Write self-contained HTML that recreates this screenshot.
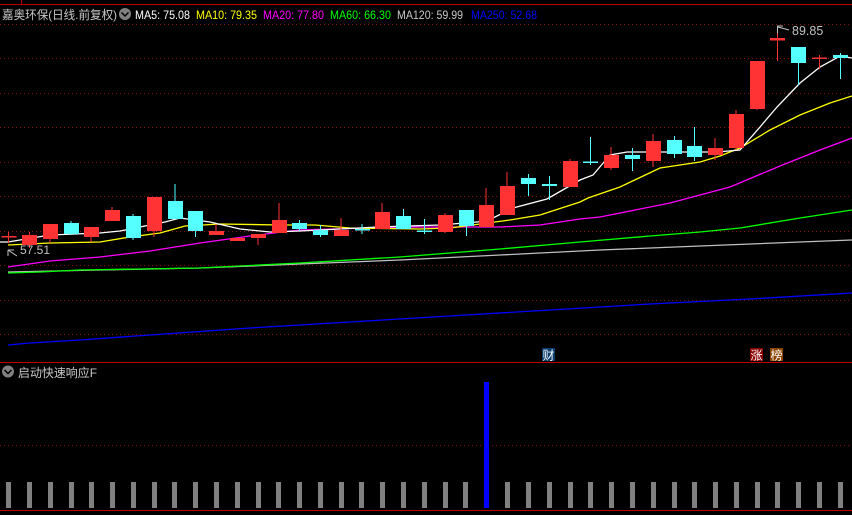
<!DOCTYPE html>
<html><head><meta charset="utf-8"><style>
html,body{margin:0;padding:0;background:#000;overflow:hidden;}
svg{display:block;font-family:"Liberation Sans","Noto Sans CJK SC",sans-serif;}
</style></head><body>
<svg width="852" height="515" viewBox="0 0 852 515" xmlns="http://www.w3.org/2000/svg">
<rect width="852" height="515" fill="#000"/>
<line x1="0" y1="4.5" x2="852" y2="4.5" stroke="#c00000" stroke-width="1"/>
<line x1="21.5" y1="0" x2="21.5" y2="4" stroke="#c00000"/>
<g stroke="#8a1010" stroke-width="1" stroke-dasharray="1,3">
<line x1="0" y1="24.5" x2="852" y2="24.5"/>
<line x1="0" y1="58.5" x2="852" y2="58.5"/>
<line x1="0" y1="93.5" x2="852" y2="93.5"/>
<line x1="0" y1="127.5" x2="852" y2="127.5"/>
<line x1="0" y1="162.5" x2="852" y2="162.5"/>
<line x1="0" y1="196.5" x2="852" y2="196.5"/>
<line x1="0" y1="231.5" x2="852" y2="231.5"/>
<line x1="0" y1="265.5" x2="852" y2="265.5"/>
<line x1="0" y1="300.5" x2="852" y2="300.5"/>
<line x1="0" y1="334.5" x2="852" y2="334.5"/>
<line x1="0" y1="445.5" x2="852" y2="445.5"/>
</g>
<line x1="0" y1="362.5" x2="852" y2="362.5" stroke="#c00000"/>
<line x1="0" y1="510.5" x2="852" y2="510.5" stroke="#c00000"/>

<text x="2" y="19" font-size="12" fill="#c8c8c8" textLength="115" lengthAdjust="spacingAndGlyphs">嘉奥环保(日线.前复权)</text>
<circle cx="125" cy="14" r="6" fill="#808080"/>
<path d="M121.5 12.5 L125 16 L128.5 12.5" stroke="#000" stroke-width="1.5" fill="none"/>
<g font-size="12">
<text x="135" y="19" fill="#ffffff" textLength="55" lengthAdjust="spacingAndGlyphs">MA5: 75.08</text>
<text x="196" y="19" fill="#ffff00" textLength="61" lengthAdjust="spacingAndGlyphs">MA10: 79.35</text>
<text x="263" y="19" fill="#ff00ff" textLength="61" lengthAdjust="spacingAndGlyphs">MA20: 77.80</text>
<text x="330" y="19" fill="#00ff00" textLength="61" lengthAdjust="spacingAndGlyphs">MA60: 66.30</text>
<text x="397" y="19" fill="#c8c8c8" textLength="66" lengthAdjust="spacingAndGlyphs">MA120: 59.99</text>
<text x="471" y="19" fill="#0000ff" textLength="66" lengthAdjust="spacingAndGlyphs">MA250: 52.68</text>
</g>

<polyline fill="none" stroke="#0000ff" stroke-width="1.3" points="8,345 30,343 80,340 150,335 250,328 350,322 450,316 550,310 650,304 750,299 852,293"/>
<polyline fill="none" stroke="#c0c0c0" stroke-width="1.3" points="8,272 100,270 200,268 300,264 400,260 500,255 600,250 700,246 800,242 852,240"/>
<polyline fill="none" stroke="#00ff00" stroke-width="1.3" points="8,273 40,272 80,270 200,268 300,263 400,257 500,249 580,242 650,236 700,232 740,228 800,218 852,210"/>
<polyline fill="none" stroke="#ff00ff" stroke-width="1.3" points="8,267 50,261 100,257 150,251 200,243 250,236 290,231 300,230 400,227 500,227 540,225 580,219 600,217 670,203 730,187 780,166 820,150 852,138"/>
<polyline fill="none" stroke="#ffff00" stroke-width="1.3" points="8,245 50,243 100,242 130,237 160,233 185,226 220,224 280,225 315,225 350,228 420,229 450,228 480,224 510,220 540,215 580,202 588,198 620,187 660,168 700,162 720,156 740,148 770,130 800,115 830,103 852,96"/>
<polyline fill="none" stroke="#ffffff" stroke-width="1.3" points="0,242 8,242 50,235 100,233 120,231 150,225 165,222 180,218 210,222 240,229 270,232 300,231 340,229 377,227 440,225 477,222 487,221 513,208 547,199 580,180 593,175 610,155 627,152 717,152 740,150 760,127 777,107 800,83 820,67 840,56 852,58"/>

<g fill="#ff3333" stroke="#ff3333">
<line x1="8.5" y1="232" x2="8.5" y2="243"/><rect x="1.5" y="236" width="15" height="1.5" stroke="none"/>
<line x1="29.5" y1="232" x2="29.5" y2="248"/><rect x="22" y="235" width="15" height="10" stroke="none"/>
<line x1="50" y1="224" x2="50" y2="243"/><rect x="43" y="224" width="15" height="15" stroke="none"/>
<line x1="91" y1="227" x2="91" y2="242"/><rect x="84" y="227" width="15" height="10" stroke="none"/>
<line x1="112" y1="207" x2="112" y2="221"/><rect x="105" y="210" width="15" height="11" stroke="none"/>
<line x1="154" y1="197" x2="154" y2="237"/><rect x="147" y="197" width="15" height="34" stroke="none"/>
<line x1="216" y1="224" x2="216" y2="235"/><rect x="209" y="231" width="15" height="4" stroke="none"/>
<rect x="230" y="238" width="15" height="3" stroke="none"/>
<line x1="258" y1="234" x2="258" y2="245"/><rect x="251" y="234" width="15" height="4" stroke="none"/>
<line x1="279" y1="203" x2="279" y2="233"/><rect x="272" y="220" width="15" height="13" stroke="none"/>
<line x1="341" y1="218" x2="341" y2="236"/><rect x="334" y="230" width="15" height="6" stroke="none"/>
<line x1="382" y1="203" x2="382" y2="229"/><rect x="375" y="212" width="15" height="17" stroke="none"/>
<line x1="445" y1="213" x2="445" y2="233"/><rect x="438" y="215" width="15" height="17" stroke="none"/>
<line x1="486" y1="188" x2="486" y2="227"/><rect x="479" y="205" width="15" height="22" stroke="none"/>
<line x1="507" y1="172" x2="507" y2="215"/><rect x="500" y="186" width="15" height="29" stroke="none"/>
<line x1="570" y1="159" x2="570" y2="187"/><rect x="563" y="161" width="15" height="26" stroke="none"/>
<line x1="611" y1="147" x2="611" y2="170"/><rect x="604" y="155" width="15" height="13" stroke="none"/>
<line x1="653" y1="134" x2="653" y2="167"/><rect x="646" y="141" width="15" height="20" stroke="none"/>
<line x1="715" y1="138" x2="715" y2="160"/><rect x="708" y="148" width="15" height="7" stroke="none"/>
<line x1="736" y1="110" x2="736" y2="150"/><rect x="729" y="114" width="15" height="34" stroke="none"/>
<line x1="757" y1="61" x2="757" y2="110"/><rect x="750" y="61" width="15" height="48" stroke="none"/>
<line x1="777.5" y1="27" x2="777.5" y2="61"/><rect x="770" y="38" width="15" height="2.5" stroke="none"/>
<line x1="819.5" y1="55" x2="819.5" y2="69"/><rect x="812" y="57.5" width="15" height="1.5" stroke="none"/>
</g>
<g fill="#55ffff" stroke="#55ffff">
<line x1="71" y1="221" x2="71" y2="235"/><rect x="64" y="223" width="15" height="11" stroke="none"/>
<line x1="133" y1="214" x2="133" y2="240"/><rect x="126" y="216" width="15" height="22" stroke="none"/>
<line x1="175" y1="184" x2="175" y2="219"/><rect x="168" y="201" width="15" height="18" stroke="none"/>
<line x1="195.5" y1="211" x2="195.5" y2="237"/><rect x="188" y="211" width="15" height="20" stroke="none"/>
<line x1="299.5" y1="220" x2="299.5" y2="231"/><rect x="292" y="223" width="15" height="6" stroke="none"/>
<line x1="320.5" y1="225" x2="320.5" y2="237"/><rect x="313" y="230" width="15" height="5" stroke="none"/>
<line x1="362" y1="224" x2="362" y2="234"/><rect x="355" y="229" width="15" height="1.5" stroke="none"/>
<line x1="403.5" y1="209" x2="403.5" y2="229"/><rect x="396" y="216" width="15" height="13" stroke="none"/>
<line x1="424.5" y1="219" x2="424.5" y2="234"/><rect x="417" y="230.5" width="15" height="1.5" stroke="none"/>
<line x1="466.5" y1="210" x2="466.5" y2="236"/><rect x="459" y="210" width="15" height="16" stroke="none"/>
<line x1="528.5" y1="174" x2="528.5" y2="196"/><rect x="521" y="178" width="15" height="6" stroke="none"/>
<line x1="549.5" y1="176" x2="549.5" y2="200"/><rect x="542" y="184" width="15" height="2" stroke="none"/>
<line x1="590.5" y1="137" x2="590.5" y2="165"/><rect x="583" y="161.5" width="15" height="1.5" stroke="none"/>
<line x1="632.5" y1="148" x2="632.5" y2="171"/><rect x="625" y="155" width="15" height="4" stroke="none"/>
<line x1="674.5" y1="136" x2="674.5" y2="158"/><rect x="667" y="140" width="15" height="14" stroke="none"/>
<line x1="694.5" y1="127" x2="694.5" y2="161"/><rect x="687" y="146" width="15" height="11" stroke="none"/>
<line x1="798.5" y1="47" x2="798.5" y2="85"/><rect x="791" y="47" width="15" height="16" stroke="none"/>
<line x1="840.5" y1="53" x2="840.5" y2="79"/><rect x="833" y="55" width="15" height="3" stroke="none"/>
</g>

<path d="M8 250 L8 256 M8 250 L14 250 M8 250 L17 256" stroke="#c0c0c0" fill="none" stroke-width="1"/>
<text x="20" y="254" font-size="12" fill="#c0c0c0">57.51</text>
<path d="M777.5 26 L777.5 33 M777.5 26 L783 26 M778 27 L789 30" stroke="#c0c0c0" fill="none" stroke-width="1"/>
<text x="792" y="35" font-size="12.5" fill="#c0c0c0">89.85</text>

<rect x="542" y="348" width="13" height="13" fill="#0a3d6e"/>
<text x="542.5" y="359.5" font-size="12" fill="#fff">财</text>
<rect x="750" y="348" width="13" height="13" fill="#8b0000"/>
<text x="750.5" y="359.5" font-size="12" fill="#fff">涨</text>
<rect x="770" y="348" width="13" height="13" fill="#8b4500"/>
<text x="770.5" y="359.5" font-size="12" fill="#fff">榜</text>

<circle cx="8" cy="371.5" r="6" fill="#808080"/>
<path d="M4.5 370 L8 373.5 L11.5 370" stroke="#000" stroke-width="1.5" fill="none"/>
<text x="18" y="377" font-size="12" fill="#c8c8c8" textLength="79" lengthAdjust="spacingAndGlyphs">启动快速响应F</text>

<g fill="#808080">
<rect x="6" y="482" width="5" height="26"/><rect x="27" y="482" width="5" height="26"/><rect x="48" y="482" width="5" height="26"/><rect x="69" y="482" width="5" height="26"/><rect x="89" y="482" width="5" height="26"/><rect x="110" y="482" width="5" height="26"/><rect x="131" y="482" width="5" height="26"/><rect x="152" y="482" width="5" height="26"/><rect x="172" y="482" width="5" height="26"/><rect x="193" y="482" width="5" height="26"/><rect x="214" y="482" width="5" height="26"/><rect x="235" y="482" width="5" height="26"/><rect x="256" y="482" width="5" height="26"/><rect x="276" y="482" width="5" height="26"/><rect x="297" y="482" width="5" height="26"/><rect x="318" y="482" width="5" height="26"/><rect x="339" y="482" width="5" height="26"/><rect x="359" y="482" width="5" height="26"/><rect x="380" y="482" width="5" height="26"/><rect x="401" y="482" width="5" height="26"/><rect x="422" y="482" width="5" height="26"/><rect x="443" y="482" width="5" height="26"/><rect x="463" y="482" width="5" height="26"/>
<rect x="505" y="482" width="5" height="26"/><rect x="526" y="482" width="5" height="26"/><rect x="547" y="482" width="5" height="26"/><rect x="568" y="482" width="5" height="26"/><rect x="588" y="482" width="5" height="26"/><rect x="609" y="482" width="5" height="26"/><rect x="630" y="482" width="5" height="26"/><rect x="651" y="482" width="5" height="26"/><rect x="672" y="482" width="5" height="26"/><rect x="692" y="482" width="5" height="26"/><rect x="713" y="482" width="5" height="26"/><rect x="734" y="482" width="5" height="26"/><rect x="755" y="482" width="5" height="26"/><rect x="775" y="482" width="5" height="26"/><rect x="796" y="482" width="5" height="26"/><rect x="817" y="482" width="5" height="26"/><rect x="838" y="482" width="5" height="26"/>
</g>
<rect x="484" y="382" width="5" height="126" fill="#0000ff"/>

<g font-size="12">
<text x="18" y="524" fill="#c8c8c8">VAR1: 0.00</text>
<text x="160" y="524" fill="#ffff00">ZD: 0.00</text>
<text x="220" y="524" fill="#ff00ff">ZX: 0.00</text>
</g>
</svg>
</body></html>
